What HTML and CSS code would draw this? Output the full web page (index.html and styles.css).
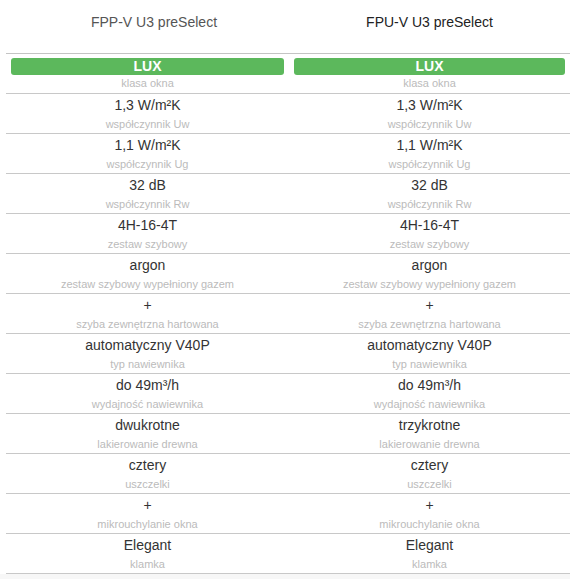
FILE: index.html
```html
<!DOCTYPE html>
<html lang="pl">
<head>
<meta charset="utf-8">
<title>Porównanie okien</title>
<link rel="stylesheet" href="styles.css">
</head>
<body>
<div class="compare">
  <div class="head">
    <div class="head-cell head-left">FPP-V U3 preSelect</div>
    <div class="head-cell head-right">FPU-V U3 preSelect</div>
  </div>
  <div class="rows">
    <div class="row row-lux">
      <div class="cell"><div class="badge">LUX</div><div class="label">klasa okna</div></div>
      <div class="cell"><div class="badge">LUX</div><div class="label">klasa okna</div></div>
    </div>
    <div class="row">
      <div class="cell"><div class="value">1,3 W/m²K</div><div class="label">współczynnik Uw</div></div>
      <div class="cell"><div class="value">1,3 W/m²K</div><div class="label">współczynnik Uw</div></div>
    </div>
    <div class="row">
      <div class="cell"><div class="value">1,1 W/m²K</div><div class="label">współczynnik Ug</div></div>
      <div class="cell"><div class="value">1,1 W/m²K</div><div class="label">współczynnik Ug</div></div>
    </div>
    <div class="row">
      <div class="cell"><div class="value">32 dB</div><div class="label">współczynnik Rw</div></div>
      <div class="cell"><div class="value">32 dB</div><div class="label">współczynnik Rw</div></div>
    </div>
    <div class="row">
      <div class="cell"><div class="value">4H-16-4T</div><div class="label">zestaw szybowy</div></div>
      <div class="cell"><div class="value">4H-16-4T</div><div class="label">zestaw szybowy</div></div>
    </div>
    <div class="row">
      <div class="cell"><div class="value">argon</div><div class="label">zestaw szybowy wypełniony gazem</div></div>
      <div class="cell"><div class="value">argon</div><div class="label">zestaw szybowy wypełniony gazem</div></div>
    </div>
    <div class="row">
      <div class="cell"><div class="value">+</div><div class="label">szyba zewnętrzna hartowana</div></div>
      <div class="cell"><div class="value">+</div><div class="label">szyba zewnętrzna hartowana</div></div>
    </div>
    <div class="row">
      <div class="cell"><div class="value">automatyczny V40P</div><div class="label">typ nawiewnika</div></div>
      <div class="cell"><div class="value">automatyczny V40P</div><div class="label">typ nawiewnika</div></div>
    </div>
    <div class="row">
      <div class="cell"><div class="value">do 49m³/h</div><div class="label">wydajność nawiewnika</div></div>
      <div class="cell"><div class="value">do 49m³/h</div><div class="label">wydajność nawiewnika</div></div>
    </div>
    <div class="row">
      <div class="cell"><div class="value">dwukrotne</div><div class="label">lakierowanie drewna</div></div>
      <div class="cell"><div class="value">trzykrotne</div><div class="label">lakierowanie drewna</div></div>
    </div>
    <div class="row">
      <div class="cell"><div class="value">cztery</div><div class="label">uszczelki</div></div>
      <div class="cell"><div class="value">cztery</div><div class="label">uszczelki</div></div>
    </div>
    <div class="row">
      <div class="cell"><div class="value">+</div><div class="label">mikrouchylanie okna</div></div>
      <div class="cell"><div class="value">+</div><div class="label">mikrouchylanie okna</div></div>
    </div>
    <div class="row">
      <div class="cell"><div class="value">Elegant</div><div class="label">klamka</div></div>
      <div class="cell"><div class="value">Elegant</div><div class="label">klamka</div></div>
    </div>
  </div>
</div>
<div class="foot"></div>
</body>
</html>
```
FILE: styles.css
```css
html, body {
  margin: 0;
  padding: 0;
  overflow: hidden;
  background: #ffffff;
  font-family: "Liberation Sans", Arial, sans-serif;
}

.compare {
  margin-left: 6px;
  width: 564px;
}

.head {
  display: grid;
  grid-template-columns: 283px 281px;
  height: 53px;
}

.head-cell {
  font-size: 14px;
  line-height: 17px;
  padding-top: 14px;
  text-align: center;
}

.head-left {
  color: #555555;
  padding-left: 13px;
}

.head-right {
  color: #222222;
}

.rows {
  border-top: 1px solid #c4c4c4;
}

.row {
  display: grid;
  grid-template-columns: 283px 281px;
  border-bottom: 1px solid #c8c8c8;
  height: 39px;
}

.cell {
  text-align: center;
  padding-top: 1px;
}

.value {
  font-size: 14px;
  line-height: 20px;
  color: #333333;
}

.label {
  font-size: 11px;
  line-height: 14px;
  margin-top: 2px;
  color: #bbbbbb;
}

.row-lux .cell {
  padding-top: 4px;
}

.badge {
  margin: 0 5px 1px 5px;
  height: 17px;
  line-height: 17px;
  background: #5cb85c;
  border-radius: 3px;
  color: #ffffff;
  font-weight: bold;
  font-size: 14px;
}

.row-lux .label {
  margin-top: 0;
}

.foot {
  height: 10px;
  background: #f7f7f7;
}
```
